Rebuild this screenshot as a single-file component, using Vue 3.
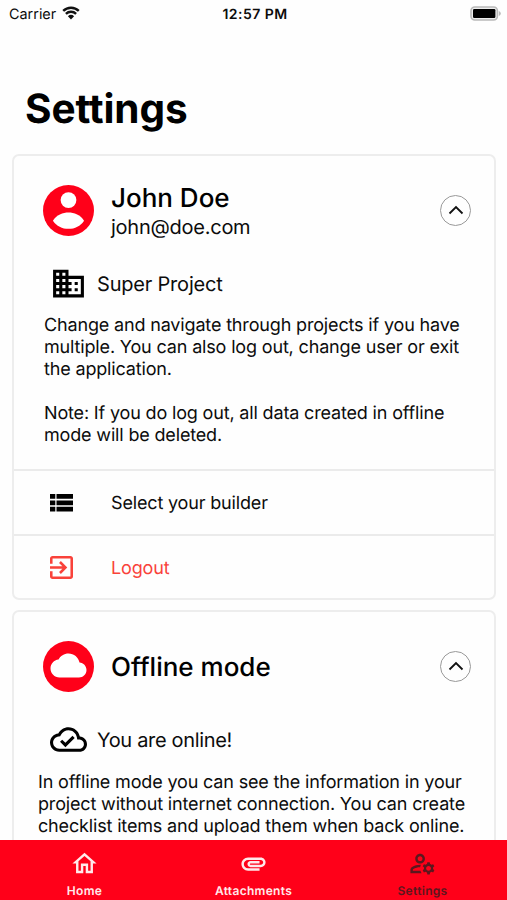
<template>
  <div class="screen">
    <header class="status-bar">
      <div class="carrier">
        <span>Carrier</span>
        <svg class="wifi" viewBox="0 0 18 14">
          <path d="M1.2 4.9a11.2 11.2 0 0 1 15.6 0M3.9 7.9a7.3 7.3 0 0 1 10.2 0" />
          <path class="wifi-dot" d="M9 13.6L5.9 10.3a4.5 4.5 0 0 1 6.2 0z" />
        </svg>
      </div>
      <div class="time">12:57 PM</div>
      <div class="battery-wrap">
        <svg class="battery" viewBox="0 0 31 15">
          <rect class="battery-shell" x="1" y="1" width="26.4" height="13" rx="3.8" />
          <rect x="3" y="3" width="22.4" height="9" rx="1.2" />
          <path class="battery-cap" d="M28.8 5q2 .7 2 2.5t-2 2.5z" />
        </svg>
      </div>
    </header>

    <h1 class="page-title">Settings</h1>

    <main class="cards">
      <section class="card">
        <div class="card-header">
          <svg class="avatar" viewBox="2 2 20 20">
            <circle cx="12" cy="12" r="10" />
            <circle class="avatar-fg" cx="12" cy="7.9" r="3.1" />
            <path class="avatar-fg" d="M5.9 16C7.2 13.8 9.9 12.8 12 12.8S16.8 13.8 18.1 16C16.7 18.1 14.5 19.2 12 19.2S7.3 18.1 5.9 16z" />
          </svg>
          <div class="card-heading">
            <h2 class="name">John Doe</h2>
            <p class="email">john@doe.com</p>
          </div>
          <button class="toggle" type="button" @click="profileOpen = !profileOpen">
            <svg viewBox="0 0 16 10" :class="{ flipped: !profileOpen }"><path d="M1.5 8.5L8 2l6.5 6.5" /></svg>
          </button>
        </div>
        <template v-if="profileOpen">
          <div class="sub-row">
            <svg class="sub-icon" viewBox="0 0 24 24"><path :d="icons.building" /></svg>
            <span class="project">Super Project</span>
          </div>
          <div class="text profile-text">
            <p>
              Change and navigate through projects if you have<br>
              multiple. You can also log out, change user or exit<br>
              the application.
            </p>
            <p>
              Note: If you do log out, all data created in offline<br>
              mode will be deleted.
            </p>
          </div>
          <div class="action">
            <svg class="list-icon" viewBox="0 0 23 18">
              <path d="M0 0h5.3v4.8H0zM6.5 0H23v4.8H6.5zM0 6.4h5.3v4.8H0zM6.5 6.4H23v4.8H6.5zM0 12.8h5.3v4.8H0zM6.5 12.8H23v4.8H6.5z" />
            </svg>
            <span>Select your builder</span>
          </div>
          <div class="action logout">
            <svg class="logout-icon" viewBox="3 3 18 18"><path :d="icons.logout" /></svg>
            <span>Logout</span>
          </div>
        </template>
      </section>

      <section class="card">
        <div class="card-header">
          <svg class="avatar" viewBox="0 0 51 51">
            <circle cx="25.5" cy="25.5" r="25.5" />
            <path class="avatar-fg" transform="translate(7.5 6.5) scale(1.5)" :d="icons.cloud" />
          </svg>
          <h2 class="offline-title">Offline mode</h2>
          <button class="toggle" type="button" @click="offlineOpen = !offlineOpen">
            <svg viewBox="0 0 16 10" :class="{ flipped: !offlineOpen }"><path d="M1.5 8.5L8 2l6.5 6.5" /></svg>
          </button>
        </div>
        <template v-if="offlineOpen">
          <div class="sub-row">
            <svg class="sub-icon" viewBox="0 0 24 24"><path :d="icons.cloudDone" /></svg>
            <span class="online">You are online!</span>
          </div>
          <div class="text offline-text">
            <p>
              In offline mode you can see the information in your<br>
              project without internet connection. You can create<br>
              checklist items and upload them when back online.
            </p>
          </div>
        </template>
      </section>
    </main>

    <nav class="tab-bar">
      <a
        v-for="tab in tabs"
        :key="tab.id"
        class="tab"
        :class="{ active: tab.id === activeTab }"
        @click="activeTab = tab.id"
      >
        <svg class="tab-icon" viewBox="0 0 24 24"><path :d="tab.icon" /></svg>
        <span class="tab-label">{{ tab.label }}</span>
      </a>
    </nav>
  </div>
</template>

<script setup>
import { ref } from 'vue'

const profileOpen = ref(true)
const offlineOpen = ref(true)
const activeTab = ref('settings')

const icons = {
  building: 'M12 7V3H2v18h20V7H12zM6 19H4v-2h2v2zm0-4H4v-2h2v2zm0-4H4V9h2v2zm0-4H4V5h2v2zm4 12H8v-2h2v2zm0-4H8v-2h2v2zm0-4H8V9h2v2zm0-4H8V5h2v2zm10 12h-8v-2h2v-2h-2v-2h2v-2h-2V9h8v10zm-2-8h-2v2h2v-2zm0 4h-2v2h2v-2z',
  logout: 'M10.09 15.59L11.5 17l5-5-5-5-1.41 1.41L12.67 11H3v2h9.67l-2.58 2.59zM19 3H5c-1.11 0-2 .9-2 2v4h2V5h14v14H5v-4H3v4c0 1.1.89 2 2 2h14c1.1 0 2-.9 2-2V5c0-1.1-.9-2-2-2z',
  cloud: 'M19.35 10.04C18.67 6.59 15.64 4 12 4 9.11 4 6.6 5.64 5.35 8.04 2.34 8.36 0 10.91 0 14c0 3.31 2.69 6 6 6h13c2.76 0 5-2.24 5-5 0-2.64-2.05-4.78-4.65-4.96z',
  cloudDone: 'M19.35 10.04C18.67 6.59 15.64 4 12 4 9.11 4 6.61 5.64 5.36 8.04 2.35 8.36 0 10.9 0 14c0 3.31 2.69 6 6 6h13c2.76 0 5-2.24 5-5 0-2.64-2.05-4.78-4.65-4.96zM19 18H6c-2.21 0-4-1.79-4-4 0-2.05 1.53-3.76 3.56-3.97l1.07-.11.5-.95C8.08 7.14 9.94 6 12 6c2.62 0 4.88 1.86 5.39 4.43l.3 1.5 1.53.11c1.56.1 2.78 1.41 2.78 2.96 0 1.65-1.35 3-3 3zm-9-3.82l-2.09-2.09L6.5 13.5 10 17l6.01-6.01-1.41-1.41z'
}

const tabs = [
  {
    id: 'home',
    label: 'Home',
    icon: 'M12 5.69l5 4.5V18h-2v-6H9v6H7v-7.81l5-4.5M12 3L2 12h3v8h6v-6h2v6h6v-8h3L12 3z'
  },
  {
    id: 'attachments',
    label: 'Attachments',
    icon: 'M2 12.5C2 9.46 4.46 7 7.5 7H18c2.21 0 4 1.79 4 4s-1.79 4-4 4H9.5C8.12 15 7 13.88 7 12.5S8.12 10 9.5 10H17v2H9.41c-.55 0-.55 1 0 1H18c1.1 0 2-.9 2-2s-.9-2-2-2H7.5C5.57 9 4 10.57 4 12.5S5.57 16 7.5 16H17v2H7.5C4.46 18 2 15.54 2 12.5z'
  },
  {
    id: 'settings',
    label: 'Settings',
    icon: 'M4 18v-.65c0-.34.16-.66.41-.81C6.1 15.53 8.03 15 10 15c.03 0 .05 0 .08.01.1-.7.3-1.37.59-1.98-.22-.02-.44-.03-.67-.03-2.42 0-4.68.67-6.61 1.82-.88.52-1.39 1.5-1.39 2.53V20h9.26c-.42-.6-.75-1.28-.97-2H4zM10 12c2.21 0 4-1.79 4-4s-1.79-4-4-4-4 1.79-4 4 1.79 4 4 4zm0-6c1.1 0 2 .9 2 2s-.9 2-2 2-2-.9-2-2 .9-2 2-2zM20.75 16c0-.22-.03-.42-.06-.63l1.14-1.01-1-1.73-1.45.49c-.32-.27-.68-.48-1.08-.63L18 11h-2l-.3 1.49c-.4.15-.76.36-1.08.63l-1.45-.49-1 1.73 1.14 1.01c-.03.21-.06.41-.06.63s.03.42.06.63l-1.14 1.01 1 1.73 1.45-.49c.32.27.68.48 1.08.63L16 21h2l.3-1.49c.4-.15.76-.36 1.08-.63l1.45.49 1-1.73-1.14-1.01c.03-.21.06-.41.06-.63zM17 18c-1.1 0-2-.9-2-2s.9-2 2-2 2 .9 2 2-.9 2-2 2z'
  }
]
</script>

<style>
body {
  margin: 0;
  background: #fff;
}
</style>

<style scoped>
.screen {
  display: flex;
  flex-direction: column;
  width: 507px;
  height: 900px;
  overflow: hidden;
  background: #fefefe;
  color: #0c0c0c;
  font-family: Inter, "Liberation Sans", sans-serif;
  text-rendering: geometricPrecision;
}

.screen *,
.screen {
  box-sizing: border-box;
}

h1,
h2,
p {
  margin: 0;
}

svg {
  display: block;
  flex: none;
}

span,
h1,
h2,
p,
.time {
  white-space: nowrap;
}

.status-bar {
  display: grid;
  grid-template-columns: 1fr auto 1fr;
  align-items: center;
  height: 28px;
  flex: none;
  padding: 0 6px 0 9px;
  font-size: 14.4px;
}

.carrier {
  display: flex;
  align-items: center;
  gap: 6px;
}

.wifi {
  width: 18px;
  height: 14px;
  margin-top: -3px;
  fill: none;
  stroke: #111;
  stroke-width: 2.4;
}

.wifi-dot {
  fill: #111;
  stroke: none;
}

.time {
  font-weight: 600;
  font-size: 14px;
  letter-spacing: 0.45px;
}

.battery-wrap {
  display: flex;
  justify-content: flex-end;
}

.battery {
  width: 31px;
  height: 15px;
  margin-top: -2px;
  fill: #000;
}

.battery-shell {
  fill: #eee;
  stroke: #b9b9b9;
  stroke-width: 1.6;
}

.battery-cap {
  fill: #b9b9b9;
}

.page-title {
  flex: none;
  height: 126px;
  padding: 56px 0 0 25px;
  color: #000;
  font-size: 40.5px;
  font-weight: 700;
  line-height: 50px;
  letter-spacing: -0.1px;
  font-variant-ligatures: none;
  font-feature-settings: "calt" 0;
}

.cards {
  display: flex;
  flex: 1;
  flex-direction: column;
  gap: 10px;
  min-height: 0;
  padding: 0 11px 0 12px;
  overflow: hidden;
}

.card {
  flex: none;
  border: 2px solid #ededed;
  border-radius: 7px;
}

.card-header {
  display: flex;
  align-items: center;
  height: 108px;
  padding: 0 23px 0 29px;
}

.avatar {
  width: 51px;
  height: 51px;
  margin-right: 17px;
  fill: #ff0019;
}

.avatar-fg {
  fill: #fff;
}

.card-heading {
  display: flex;
  flex-direction: column;
  padding-top: 3px;
}

.name,
.offline-title {
  color: #000;
  font-size: 26px;
  font-weight: 500;
  line-height: 32px;
}

.offline-title {
  padding-top: 3px;
}

.email {
  font-size: 20px;
  line-height: 25px;
  letter-spacing: -0.25px;
}

.toggle {
  display: flex;
  align-items: center;
  justify-content: center;
  width: 31px;
  height: 31px;
  margin-left: auto;
  padding: 0;
  border: 1px solid #999;
  border-radius: 50%;
  background: none;
}

.toggle svg {
  width: 16px;
  height: 10px;
  margin-top: -1px;
  fill: none;
  stroke: #111;
  stroke-width: 1.8;
}

.flipped {
  transform: rotate(180deg);
}

.sub-row {
  display: flex;
  align-items: center;
  gap: 10px;
  height: 38px;
  padding-left: 36px;
  font-size: 20px;
}

.sub-row span {
  padding-top: 1px;
}

.project {
  letter-spacing: -0.2px;
}

.online {
  letter-spacing: -0.33px;
}

.sub-icon {
  width: 37px;
  height: 37px;
  fill: #000;
}

.text {
  font-size: 18px;
  line-height: 22px;
  letter-spacing: -0.16px;
}

.text p + p {
  margin-top: 22px;
}

.profile-text {
  height: 167px;
  padding: 13px 0 0 30px;
}

.offline-text {
  height: 168px;
  padding: 14px 0 0 24px;
}

.action {
  display: flex;
  align-items: center;
  height: 65px;
  padding-left: 36px;
  border-top: 2px solid #ebebeb;
  font-size: 18px;
  letter-spacing: -0.16px;
}

.action span {
  padding-top: 2px;
}

.list-icon {
  width: 23px;
  height: 18px;
  margin-right: 38px;
  fill: #000;
}

.logout {
  height: 64px;
  color: #f9423a;
}

.logout-icon {
  width: 23px;
  height: 23px;
  margin-right: 38px;
  fill: currentColor;
}

.tab-bar {
  display: grid;
  grid-template-columns: repeat(3, 1fr);
  flex: none;
  height: 60px;
  background: #ff0019;
}

.tab {
  display: flex;
  flex-direction: column;
  align-items: center;
  justify-content: flex-end;
  padding-bottom: 1px;
  color: #ffe9ea;
  cursor: pointer;
}

.tab-icon {
  width: 29px;
  height: 29px;
  fill: currentColor;
}

.tab-label {
  margin-top: 5px;
  font-size: 12px;
  font-weight: 600;
  line-height: 16px;
  letter-spacing: 0.3px;
}

.active {
  color: #5c171e;
}
</style>
